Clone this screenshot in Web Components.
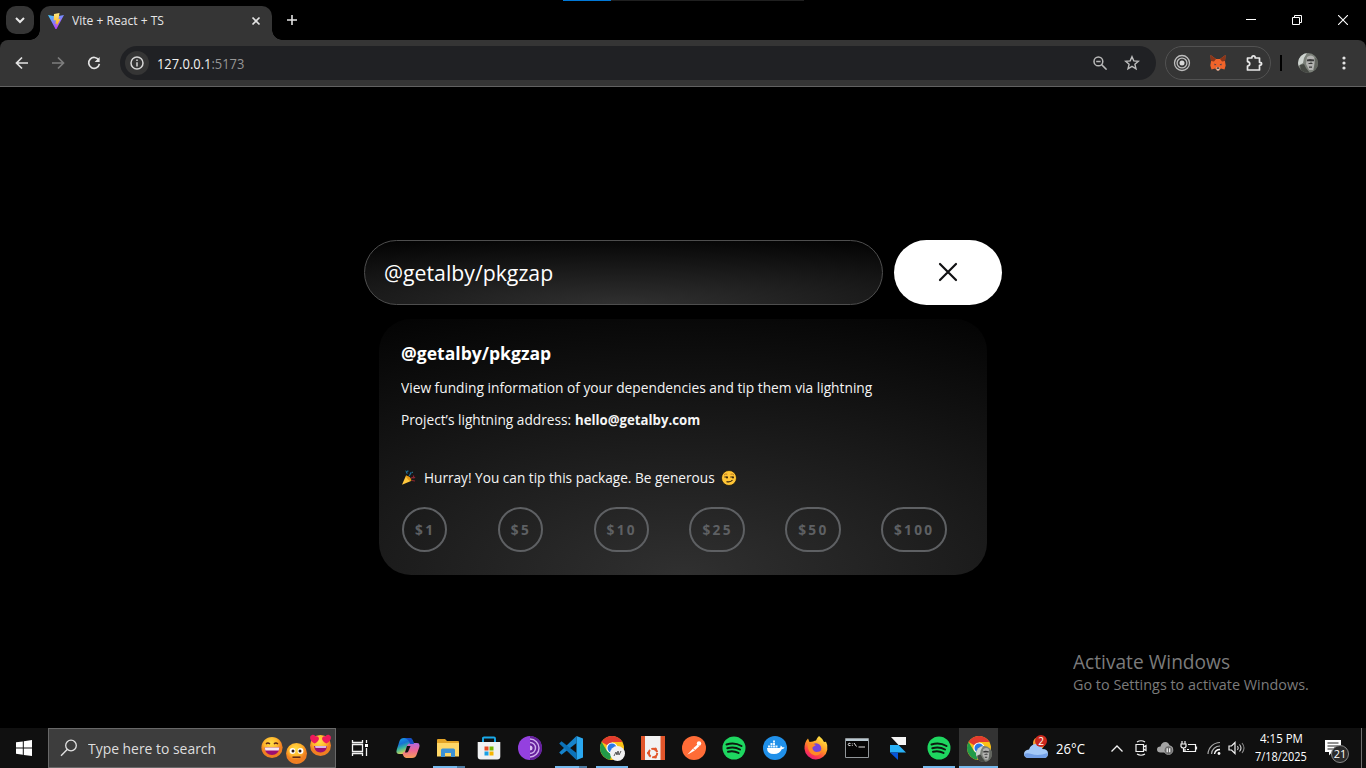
<!DOCTYPE html>
<html lang="en">
<head>
<meta charset="utf-8">
<title>Vite + React + TS</title>
<style>
html,body{margin:0;background:#000;width:1366px;height:768px;overflow:hidden;font-family:"Open Sans","Noto Sans",sans-serif}
</style>
</head>
<body>
<desktop-screen></desktop-screen>
<script>
const ICONS = {
  down: [12,12,'<path d="M2 4l4 4 4-4" fill="none" stroke="#e8e8e8" stroke-width="2"/>'],
  vite: [16,16,'<defs><linearGradient id="a" x1="0" x2=".6" y2="1"><stop stop-color="#41d1ff"/><stop offset="1" stop-color="#bd34fe"/></linearGradient><linearGradient id="b" x2="0" y2="1"><stop stop-color="#ffea83"/><stop offset="1" stop-color="#ffa800"/></linearGradient></defs><path d="M0 2l7.500 14h1L16 2 8 3.500z" fill="url(#a)"/><path d="M11.500 0L6 1l-.3 6.500 2.300-.3-.6 3.800 1.600-.4-.8 3.400L12.500 6l-2 .3z" fill="url(#b)"/>'],
  tabx: [10,10,'<path d="M1.500 1.500l7 7m0-7l-7 7" stroke="#e3e3e3" stroke-width="1.700"/>'],
  plus: [12,12,'<path d="M6 1v10M1 6h10" stroke="#e3e3e3" stroke-width="1.600"/>'],
  back: [14,14,'<path d="M13 7H2M7 1.500L1.500 7 7 12.500" fill="none" stroke="#e3e3e3" stroke-width="1.700"/>'],
  fwd: [14,14,'<path d="M1 7h11M7 1.500L12.500 7 7 12.500" fill="none" stroke="#7d7d7d" stroke-width="1.700"/>'],
  reload: [14,14,'<path d="M11.800 4.200A5.400 5.400 0 1 0 12.400 7.800" fill="none" stroke="#e3e3e3" stroke-width="1.700"/><path d="M12.600 1v5h-5z" fill="#e3e3e3"/>'],
  info: [14,14,'<circle cx="7" cy="7" r="6" fill="none" stroke="#d6d6d6" stroke-width="1.500"/><path d="M7 6.200v4.200M7 3.400v1.600" stroke="#d6d6d6" stroke-width="1.500"/>'],
  zoomout: [14,14,'<circle cx="5.400" cy="5.400" r="4.400" fill="none" stroke="#b9b9b9" stroke-width="1.500"/><path d="M8.600 8.600l5 5M3.200 5.400h4.400" stroke="#b9b9b9" stroke-width="1.500"/>'],
  star: [16,16,'<path d="M8 1.700l1.800 4.200 4.600.4-3.500 3 1.100 4.500L8 11.400l-4 2.400 1.100-4.500-3.500-3 4.600-.4z" fill="none" stroke="#bdbdbd" stroke-width="1.400"/>'],
  rings: [18,18,'<g fill="none" stroke="#bdbdbd"><circle cx="9" cy="9" r="7.500" stroke-width="1.300"/><circle cx="9" cy="9" r="4.900" stroke-width="1.300"/></g><circle cx="9" cy="9" r="2.500" fill="#d8d8d8"/>'],
  fox: [16,16,'<path d="M.5 0L6 4h4l5.500-4L15 6.500l.7 4-1.200 4-3.500-1L9 15.500H7L5 13.500l-3.500 1-1.200-4 .7-4z" fill="#f0642a"/><path d="M.5 0L6 4 4 6.500 1 6zM15.500 0L10 4l2 2.500 3-.5z" fill="#8a3519"/><path d="M4.500 8.500l2 1.500-2 .2zM11.500 8.500l-2 1.500 2 .2z" fill="#293b57"/><path d="M6 12.500h4l-1 3H7z" fill="#d5c3b8"/><path d="M7 12.500h2l.3 1.200H6.700z" fill="#222"/>'],
  puzzle: [18,18,'<path d="M2.500 4h4.300c0-2.800 3.400-2.800 3.400 0h4.300v4.300c2.800 0 2.800 3 0 3V16h-12v-4c3-.4 3-4 0-4.400z" fill="none" stroke="#e8e8e8" stroke-width="1.700" stroke-linejoin="round"/>'],
  avatar: [20,20,'<defs><clipPath id="c"><circle cx="10" cy="10" r="10"/></clipPath></defs><g clip-path="url(#c)"><path fill="#7b8079" d="M0 0h20v20H0z"/><path fill="#cdd3cf" d="M0 0h9L6 5l-1 5-5 3z"/><path fill="#454843" d="M2 12l4-1 2 4 4 5H3z"/><path fill="#b2b2b0" d="M9 4q4-3 7 0l1 6-2 7h-4l-3-6z"/><path fill="#3a3a3a" d="M9 6.500l3-.6 4 .6v1.700H9zM10 10h5l-1 1h-3zM11 13.500h3v1.300h-3z"/><path fill="#62655f" d="M17 5l3 1v12l-4-1z"/><path fill="#858783" d="M12 8h2v2h-2z"/></g>'],
  dots: [4,14,'<g fill="#e3e3e3"><circle cx="2" cy="2" r="1.600"/><circle cx="2" cy="7" r="1.600"/><circle cx="2" cy="12" r="1.600"/></g>'],
  min: [10,10,'<path d="M0 4.500h10" stroke="#fff"/>'],
  restore: [10,10,'<path d="M.5 2.500h7v7h-7zM2.500 2.500v-2h7v7h-2" fill="none" stroke="#fff"/>'],
  close: [10,10,'<path d="M0 0l10 10M10 0L0 10" stroke="#fff" stroke-width="1.100"/>'],
  bigx: [20,20,'<path d="M2 2l16 16M18 2L2 18" stroke="#101012" stroke-width="2.200" stroke-linecap="round"/>'],
  party: [16,16,'<path d="M1 14.700L5 5.500q4 1.500 5 5.500z" fill="#ffc83d"/><path d="M5 5.500q5 1 5.500 5.300-1.500.9-3.700-1.500Q4.600 7 5 5.500z" fill="#e49b16"/><path d="M6.500 3.500c-2-1-.5-3 1-2.200M8 6c1.500-1 1-3 2.500-3.600" fill="none" stroke="#1d6e9e" stroke-width="1.300"/><path d="M10 8.500c1.500-2 2.500.5 4-1.400M12.500 5.500v2M11 10.500l3 .5" fill="none" stroke="#8c2431" stroke-width="1.200"/><path d="M11 2l1 .6M4.500 1l.8.6" stroke="#2d8b96"/>'],
  smirk: [16,16,'<circle cx="8" cy="8" r="7.500" fill="#ffc536" stroke="#15110a" stroke-width=".7"/><path d="M3 5q1.500-1.500 3.300-.8M9.500 4.200Q11.500 3.400 13 5" fill="none" stroke="#c0781f" stroke-width="1"/><path d="M3.400 7h3.200M9.300 7h3.200M5.500 11.600q4 1 6-1.600" fill="none" stroke="#37250e" stroke-width="1.200"/><circle cx="6" cy="7.500" r="1" fill="#37250e"/><circle cx="12" cy="7.500" r="1" fill="#37250e"/>'],
  start: [16,16,'<path d="M0 2.300L6.800 1.400v6.200H0zM7.800 1.200L16 0v7.600H7.800zM0 8.500h6.800v6.200L0 13.800zM7.800 8.500H16V16l-8.200-1.100z" fill="#fff"/>'],
  search: [18,18,'<circle cx="11" cy="6.500" r="5.300" fill="none" stroke="#e2e2e2" stroke-width="1.300"/><path d="M7.200 10.500L1 16.800" stroke="#e2e2e2" stroke-width="1.400"/>'],
  emojis: [72,34,'<defs><radialGradient id="e" cx=".45" cy=".3"><stop stop-color="#ffe04a"/><stop offset=".65" stop-color="#ffb52b"/><stop offset="1" stop-color="#f07f22"/></radialGradient></defs><g transform="translate(0 -1.500)"><g fill="url(#e)"><circle cx="12" cy="18" r="10.600"/><circle cx="36.500" cy="24" r="10.500"/><circle cx="60.500" cy="16" r="10.500"/></g><path d="M4.500 18h15q-1 7.500-7.500 7.500T4.500 18z" fill="#9c0f70"/><path d="M4.700 18h14.600l-.6 3H5.400z" fill="#f5e7f4"/><path d="M6 14.500q1.700-2 4 0M14 14.500q1.700-2 4 0" stroke="#5c2518" fill="none" stroke-width="1.400"/><g fill="#fff"><circle cx="32.500" cy="21.500" r="2.900"/><circle cx="40.500" cy="21.500" r="2.900"/></g><g fill="#2c1718"><circle cx="33" cy="21.500" r="1.500"/><circle cx="40" cy="21.500" r="1.500"/></g><path d="M32.500 27.700h8" stroke="#5c2518" stroke-width="1.500"/><path d="M54 16.500h13q-.8 6.500-6.500 6.500T54 16.500z" fill="#9c0f70"/><path d="M55 16.500h11.500l-.6 2H55.500z" fill="#d9b6e5"/><path d="M50.500 6.500c2.500-2.500 4.500-1 5 .6 1.500-1.200 4 0 3.300 3-.6 2.300-3.500 3.900-4 3.900-2-.8-6-4-4.300-7.500zM70.500 6.500c-2.500-2.500-4.500-1-5 .6-1.500-1.200-4 0-3.300 3 .6 2.300 3.500 3.900 4 3.900 2-.8 6-4 4.300-7.500z" fill="#ef1b5b"/></g>'],
  taskview: [18,18,'<path d="M1.500 1v2.500h10V1M1.500 5.500h10v7h-10zM1.500 17v-2.500h10V17M15.500 1v3M15.500 9v8" fill="none" stroke="#f3f3f3" stroke-width="1.300"/><path d="M14 5h3v3h-3z" fill="#fff"/>'],
  copilot: [24,22,'<defs><linearGradient id="p" x2=".4" y2="1"><stop stop-color="#16a5ef"/><stop offset=".4" stop-color="#1671d5"/><stop offset=".65" stop-color="#39b79b"/><stop offset="1" stop-color="#e9d94b"/></linearGradient><linearGradient id="q" x2="0" y2="1"><stop stop-color="#b368df"/><stop offset=".5" stop-color="#ed6694"/><stop offset="1" stop-color="#f79d57"/></linearGradient></defs><path d="M8 1h6q2 0 3 3l1 3h-4q-2 0-3 3l-1.500 5Q9 17 6.500 17H3Q-.5 17 .8 12.500L3.500 4Q4.500 1 8 1z" fill="url(#p)"/><path d="M16 21h-6q-2 0-3-3l-.5-2q2 0 3-3L11 8.500Q12 6 15 6h6q3.500 0 2.200 4.500L20.500 18q-1 3-4.500 3z" fill="url(#q)"/><path d="M8 1h6q2 0 3 3l1 3h-4q-1-5-6-6z" fill="#174cc5"/><path d="M11 9h3.500l-2 5q-.6 1.500-2 1.500H9z" fill="#111"/>'],
  folder: [24,20,'<path d="M1 2q0-1 1-1h7l2 2h11q1 0 1 1v14H1z" fill="#e3a326"/><path d="M1 5h22v13.500H1z" fill="#ffd767"/><path d="M5 19v-7q0-1.500 1.500-1.500h11Q19 10.500 19 12v7h-4v-4H9v4z" fill="#3d92d5"/>'],
  store: [24,24,'<path d="M6 7V2.500Q6 1.500 7 1.500h10q1 0 1 1V7" fill="none" stroke="#19a9e9" stroke-width="1.900"/><path d="M.7 6h22.600v14.500q0 3-3 3H3.700q-3 0-3-3z" fill="#f0f1f2"/><path d="M7.500 10.500h4v4h-4z" fill="#e84b22"/><path d="M12.500 10.500h4v4h-4z" fill="#78b600"/><path d="M7.500 15.500h4v4h-4z" fill="#1aa0e5"/><path d="M12.500 15.500h4v4h-4z" fill="#f7b500"/>'],
  tor: [24,24,'<circle cx="12" cy="12" r="12" fill="#9440df"/><path d="M12 0a12 12 0 0 1 0 24z" fill="#65209c"/><path d="M12 3a9 9 0 0 1 0 18M12 6.500a5.500 5.500 0 0 1 0 11" fill="none" stroke="#cfaeed" stroke-width="1.400"/><path d="M12 9.500a2.500 2.500 0 0 1 0 5z" fill="#dac0f2"/>'],
  vscode: [24,24,'<path d="M17.500 0L24 2.600v18.800L17.500 24z" fill="#2aa7ef"/><path d="M17.500 0v7L2.500 18.700.2 16.500z" fill="#1683cb"/><path d="M17.500 24v-7L2.500 5.300.2 7.500z" fill="#0c72b9"/>'],
  chrome: [24,24,'<circle cx="12" cy="12" r="12" fill="#fbc116"/><path d="M1.600 6A12 12 0 0 1 22.400 6H12v6z" fill="#e33b2e"/><path d="M1.600 6L7 15l5 3-2 5.800A12 12 0 0 1 1.600 6z" fill="#229a48"/><circle cx="12" cy="12" r="5.600" fill="#fff"/><circle cx="12" cy="12" r="4.500" fill="#2a78e6"/>'],
  ubuntu: [24,24,'<path fill="#f2f2f2" d="M0 0h24v24H0z"/><path fill="#e2562b" d="M0 0h4v24H0zM19.500 0H24v24h-4.500z"/><circle cx="12" cy="17" r="4.200" fill="none" stroke="#e2562b" stroke-width="2" stroke-dasharray="7.300 1.500"/><g fill="#e2562b"><circle cx="7.400" cy="17" r="1.500"/><circle cx="14.400" cy="13" r="1.500"/><circle cx="14.400" cy="21" r="1.500"/></g>'],
  postman: [24,24,'<circle cx="12" cy="12" r="12" fill="#ff6c37"/><path d="M5 19l6.500-7 4-3.500 1.800 1.700-5 4.500z" fill="#fff"/><circle cx="17" cy="7.500" r="2.200" fill="#fff"/><path d="M5 19l4-1M11 12.500l2 1.500" stroke="#ff6c37" stroke-width=".7"/>'],
  spotify: [24,24,'<circle cx="12" cy="12" r="11.500" fill="#1ed760"/><path d="M4.500 8.500q8-2.500 15 1.500M5.300 12.200q7-2 12.700 1.300M6 15.700q5.500-1.500 10.500 1.200" fill="none" stroke="#0c1a10" stroke-width="2" stroke-linecap="round"/>'],
  docker: [24,24,'<circle cx="12" cy="12" r="12" fill="#2090e9"/><path d="M4 12h12.500q1.500-.5 1-2.500 1.500.8 1.700 1.800 1.500-.4 2.500.3-1 1.600-3 1.600Q17 18 11 18q-7 0-7-6z" fill="#fff"/><path d="M5 9.500h2v2H5zM7.500 9.500h2v2h-2zM10 9.500h2v2h-2zM12.500 9.500h2v2h-2zM7.500 7h2v2h-2zM10 7h2v2h-2zM10 4.500h2v2h-2z" fill="#e9f6ff"/>'],
  firefox: [24,24,'<defs><linearGradient id="f" x1=".8" x2=".2" y2="1"><stop stop-color="#fff04a"/><stop offset=".45" stop-color="#ff9823"/><stop offset=".75" stop-color="#ff3c49"/><stop offset="1" stop-color="#e31587"/></linearGradient></defs><path d="M15 0q4 3 5 6l2-.2q2 3 1.300 8A11.500 11.500 0 0 1 .5 13Q.3 6 4 2.500L5.500 6 9 5.500q2-1 3-1 1-3 3-4.500z" fill="url(#f)"/><circle cx="12" cy="12.500" r="5.300" fill="#7543dc"/><path d="M3.500 8Q8 6.500 12 9l-3.500 2.200Q8 15 12.500 16q3.500 0 5.500-2.500-1 6-7 6-7-1-7.500-11.500z" fill="#ff8a26"/>'],
  cmd: [24,20,'<path d="M.5.500h23v19H.5z" fill="#050505" stroke="#919699"/><path d="M1 1h22v2H1z" fill="#b9c8d1"/><path d="M5.500 5.500q-2-1-2.300.8 0 2 2.300 1.200M7.300 5.500v.8M7.300 7.200V8M9 5l2.500 3.500M13.500 9H20" stroke="#e2e2e2" fill="none"/>'],
  framer: [16,23,'<path d="M1 0h15v8H8.500z" fill="#f4f4f4"/><path d="M0 8h8.500l7.500 7.500H0z" fill="#28b1f7"/><path d="M0 15.500h8V23z" fill="#0755d8"/>'],
  weather: [26,24,'<circle cx="16" cy="7" r="6" fill="#f2a235"/><path d="M6 22Q1 22 1 18t5-4.500Q8 8 13 8t6.500 5Q25 13 25 17.500T20.500 22z" fill="#a3c8f7"/><path d="M6 22Q1 22 1.500 18q2-1.500 7 0 7 2.500 16-1 1 5-4 5z" fill="#729fe6"/>'],
  chev: [14,9,'<path d="M1.500 7.500L7 2l5.500 5.500" fill="none" stroke="#f2f2f2" stroke-width="1.300"/>'],
  cam: [12,18,'<path d="M2 3q4-2.500 8 0M2 15q4 2.500 8 0M1 5.500h7.500v7H1zM8.500 8L11 6.500v5L8.500 10" fill="none" stroke="#f2f2f2" stroke-width="1.200"/>'],
  cloud: [17,14,'<path d="M3.500 11.500Q0 11.500 0 8.500t3.500-3Q4.500 1 8.500 1q3 0 4 3.500Q16 5 16 8t-3 3.500z" fill="#a4a4a4"/><circle cx="11.500" cy="9.200" r="4.400" fill="#6b6b6b" stroke="#bbb" stroke-width=".6"/><path d="M10.200 7.200v4M12.700 7.200v4" stroke="#fff" stroke-width="1.200"/>'],
  battery: [18,16,'<path d="M8 4.500h7.500v7H5V9M16.500 6.500v3M2 1v3M5 1v3M1 4h5v2.500Q5.500 8 3.500 8T1 6.500zM3.500 8v3.500H5" fill="none" stroke="#f2f2f2" stroke-width="1.200"/><path d="M7 9h2v1H7z" fill="#fff"/>'],
  wifi: [14,14,'<path d="M1 13A12 12 0 0 1 13 1.500M4.500 13A8.500 8.500 0 0 1 13 5" fill="none" stroke="#aaa" stroke-width="1.200"/><path d="M7.500 13A5.500 5.500 0 0 1 13 8.500" fill="none" stroke="#fff" stroke-width="1.300"/><circle cx="12" cy="12.500" r="1.400" fill="#fff"/>'],
  volume: [18,14,'<path d="M1 5h2.500L7 1.500v11L3.500 9H1z" fill="none" stroke="#f2f2f2" stroke-width="1.200"/><path d="M9.500 5q1.500 2 0 4M11.500 3.500q3 3.500 0 7" fill="none" stroke="#ddd" stroke-width="1.100"/><path d="M14 2q4 5 0 10" fill="none" stroke="#888" stroke-width="1.100"/>'],
  note: [16,16,'<path d="M0 0h16v12H7l-3 3.500V12H0z" fill="#fff"/><path d="M2.500 3h11M2.500 6h11M2.500 9h8" stroke="#222" stroke-width="1"/>'],
};

class UiIcon extends HTMLElement {
  connectedCallback() {
    const [w, h, body] = ICONS[this.getAttribute('name')];
    const r = this.attachShadow({mode: 'open'});
    r.innerHTML = `<style>:host{display:block;flex:none;width:${w}px;height:${h}px}svg{display:block}</style><svg width="${w}" height="${h}" viewBox="0 0 ${w} ${h}">${body}</svg>`;
  }
}
customElements.define('ui-icon', UiIcon);

/* A single line of text condensed or widened to an exact advance width. */
class FitText extends HTMLElement {
  connectedCallback() {
    const w = +this.getAttribute('w');
    const r = this.attachShadow({mode: 'open'});
    r.innerHTML = `<style>:host{display:block;flex:none;width:${w}px;white-space:nowrap}span{display:inline-block;transform-origin:0 50%}</style><span><slot></slot></span>`;
    const s = r.querySelector('span');
    s.style.transform = `scaleX(${w / s.offsetWidth})`;
  }
}
customElements.define('fit-text', FitText);

const define = (tag, html) => {
  const t = document.createElement('template');
  t.innerHTML = html;
  customElements.define(tag, class extends HTMLElement {
    constructor() { super(); this.attachShadow({mode: 'open'}); }
    connectedCallback() { if (!this.shadowRoot.firstChild) this.shadowRoot.append(document.importNode(t.content, true)); }
  });
};

define('tab-strip', `<style>
:host{display:flex;height:40px;background:#000;position:relative;box-sizing:border-box;padding-left:6px}
.menu{width:28px;height:28px;margin-top:6px;border-radius:10px;background:#353535;display:grid;place-items:center}
.tab{position:relative;margin:6px 0 0 6px;width:232px;height:34px;box-sizing:border-box;background:#353535;border-radius:10px 10px 0 0;display:flex;align-items:center;padding:0 11px 5px 8px;font-size:12px;line-height:16px;color:#e6e6e6}
.tab:before,.tab:after{content:"";position:absolute;bottom:0;width:10px;height:10px}
.tab:before{left:-10px;background:radial-gradient(circle at 0 0,#0000 9.500px,#353535 10px)}
.tab:after{right:-10px;background:radial-gradient(circle at 100% 0,#0000 9.500px,#353535 10px)}
fit-text{margin:0 auto 0 8px}
.new{margin:14px 0 0 14px}
.win{margin:15px 18px 0 auto;display:flex;gap:36px}
.load{position:absolute;left:563px;top:0;width:241px;height:1px;background:linear-gradient(90deg,#0078d7 48px,#1f1f1f 48px)}
</style><div class="menu"><ui-icon name="down"></ui-icon></div>
<div class="tab"><ui-icon name="vite"></ui-icon><fit-text w="91.500">Vite + React + TS</fit-text><ui-icon name="tabx"></ui-icon></div>
<ui-icon class="new" name="plus"></ui-icon>
<div class="win"><ui-icon name="min"></ui-icon><ui-icon name="restore"></ui-icon><ui-icon name="close"></ui-icon></div><div class="load"></div>`);

define('tool-bar', `<style>
:host{display:flex;align-items:center;height:47px;box-sizing:border-box;background:#353535;border-bottom:1px solid #626262;border-radius:8px 8px 0 0;padding:0 20px 0 15px}
.nav{display:flex;gap:22px}
.url{margin-left:19px;width:1036px;height:34px;border-radius:17px;background:#202124;display:flex;align-items:center;box-sizing:border-box;padding:0 16px 0 5px;font-size:14px;color:#f1f1f1}
.info{width:24px;height:24px;border-radius:50%;background:#353535;display:grid;place-items:center;margin-right:8px}
.url span{color:#959595}
.url ui-icon[name=zoomout]{margin-left:auto;margin-right:17px}
.ext{margin-left:9px;width:106px;height:34px;box-sizing:border-box;border:1px solid #525252;border-radius:17px;display:flex;align-items:center;justify-content:space-between;padding:0 7px 0 7px}
.bar{width:2px;height:16px;background:#000;margin:0 16px 0 9px}
ui-icon[name=dots]{margin-left:24px}
</style><div class="nav"><ui-icon name="back"></ui-icon><ui-icon name="fwd"></ui-icon><ui-icon name="reload"></ui-icon></div>
<div class="url"><div class="info"><ui-icon name="info"></ui-icon></div><fit-text w="87.500">127.0.0.1<span>:5173</span></fit-text><ui-icon name="zoomout"></ui-icon><ui-icon name="star"></ui-icon></div>
<div class="ext"><ui-icon name="rings"></ui-icon><ui-icon name="fox"></ui-icon><ui-icon name="puzzle"></ui-icon></div><div class="bar"></div><ui-icon name="avatar"></ui-icon><ui-icon name="dots"></ui-icon>`);

define('search-field', `<style>
:host{display:flex;gap:11px;height:65px;color:#fff}
.in{width:519px;box-sizing:border-box;border:1px solid #4e4e4e;border-radius:33px;background:radial-gradient(112% 118% at 50% 100%,#303030,#000);display:flex;align-items:center;padding:0 0 2px 19px;font-size:22px;line-height:30px}
.btn{width:108px;box-sizing:border-box;padding-bottom:1px;background:#fff;border-radius:33px;display:grid;place-items:center}
</style><div class="in"><fit-text w="169"><slot></slot></fit-text></div><div class="btn"><ui-icon name="bigx"></ui-icon></div>`);

define('tip-button', `<style>
:host{display:flex;height:45px;min-width:45px;box-sizing:border-box;border:2px solid #5e6063;border-radius:23px;padding:0 10px 0 11px;align-items:center;justify-self:start;color:#5e6063;font:700 13.700px/20px "Open Sans",sans-serif;letter-spacing:2.300px}
</style><slot></slot>`);

define('package-card', `<style>
:host{display:block;width:608px;height:256px;box-sizing:border-box;border-radius:32px;background:radial-gradient(112% 118% at 50% 100%,#303030,#010101);padding:22px 22px 0;color:#f5f5f5;font-size:14px;line-height:20px}
.t{font-weight:700;font-size:17.500px;line-height:25px;color:#fff}
.d{margin-top:12px}
.a{margin-top:12px;display:flex;gap:4px}
b{font-weight:700}
.h{margin-top:38px;display:flex;align-items:center}
.h fit-text{margin:0 6px 0 7px}
.tips{display:grid;grid-template-columns:repeat(6,95.800px);margin:19px 0 0 1px}
</style><fit-text class="t" w="150.500">@getalby/pkgzap</fit-text>
<fit-text class="d" w="471.500">View funding information of your dependencies and tip them via lightning</fit-text>
<div class="a"><fit-text w="170">Project’s lightning address:</fit-text><fit-text w="125.500"><b>hello@getalby.com</b></fit-text></div>
<div class="h"><ui-icon name="party"></ui-icon><fit-text w="291">Hurray! You can tip this package. Be generous</fit-text><ui-icon name="smirk"></ui-icon></div>
<div class="tips"><tip-button>$1</tip-button><tip-button>$5</tip-button><tip-button>$10</tip-button><tip-button>$25</tip-button><tip-button>$50</tip-button><tip-button>$100</tip-button></div>`);

define('page-view', `<style>
:host{display:flex;flex-direction:column;align-items:center;height:641px;box-sizing:border-box;padding-top:153px;background:#000;position:relative}
package-card{margin-top:14px}
.act{position:absolute;left:1073px;top:562px;color:#7b7b7b;font-size:15px;line-height:20px;font-family:"Open Sans";font-weight:400}
.act .b{font-size:19.500px;line-height:25px}
</style><search-field>@getalby/pkgzap</search-field><package-card></package-card>
<div class="act"><fit-text class="b" w="157">Activate Windows</fit-text><fit-text w="236">Go to Settings to activate Windows.</fit-text></div>`);

define('task-app', `<style>
:host{display:grid;place-items:center;width:40.850px;height:40px;position:relative;flex:none}
:host([active]){width:39px;background:#333}
.l{display:none;position:absolute;bottom:0;left:4.500px;width:32px;height:2px;background:#76b9ed}
:host([run]) .l{display:block}
:host([multi]) .l{background:linear-gradient(90deg,#76b9ed 24px,#4e7ca2 24px)}
:host([active]) .l{display:block;left:0;width:39px}
::slotted(.badge){position:absolute!important;left:23px;top:18px}
</style><slot></slot><div class="l"></div>`);

define('mini-badge', `<style>:host{display:grid;place-items:center;width:15px;height:15px;border-radius:50%;background:#f1f1f1;overflow:hidden}svg{display:block}</style><slot><svg width="9" height="7"><path d="M1 6l2-4 1 3 1-4 1 4 2-4" fill="none" stroke="#555"/></svg></slot>`);

define('task-bar', `<style>
:host{display:flex;height:40px;background:#101010;color:#fff}
.s{width:48px;display:grid;place-items:center}
.q{width:288px;box-sizing:border-box;border:1px solid #686868;background:#3d3d3d;display:flex;align-items:center;padding:0 3px 0 11px;font-size:15px;color:#dedede}
.q fit-text{margin:0 auto 0 10px}
.tv{width:51.200px;box-sizing:border-box;padding-right:3px;display:grid;place-items:center}
.av{transform:scale(.800);transform-origin:0 0}
.tray{margin-left:auto;display:flex;align-items:center;padding-right:4px;font-size:14.500px}
.w{position:relative;margin-right:7px}
.r{position:absolute;left:12px;top:-1px;width:12px;height:12px;border-radius:50%;background:#cc281d;font:10px/12px "Open Sans";text-align:center}
.clock{font-size:12px;line-height:18px;display:flex;flex-direction:column;align-items:center;width:54px}
.n{position:relative;margin-left:17px;width:16px;height:20px;margin-top:4px}
.c{position:absolute;left:6px;top:5px;width:18px;height:18px;box-sizing:border-box;border-radius:50%;border:1px solid #8a8a8a;background:#2a2a2a;font:11px/16px "Open Sans";text-align:center}
.e{width:1px;height:40px;background:#707070;margin-left:20px}
</style><div class="s"><ui-icon name="start"></ui-icon></div>
<div class="q"><ui-icon name="search"></ui-icon><fit-text w="128">Type here to search</fit-text><ui-icon name="emojis"></ui-icon></div>
<div class="tv"><ui-icon name="taskview"></ui-icon></div>
<task-app><ui-icon name="copilot"></ui-icon></task-app><task-app run multi><ui-icon name="folder"></ui-icon></task-app><task-app><ui-icon name="store"></ui-icon></task-app><task-app><ui-icon name="tor"></ui-icon></task-app><task-app run multi><ui-icon name="vscode"></ui-icon></task-app><task-app run><ui-icon name="chrome"></ui-icon><mini-badge class="badge" style="left:19px"></mini-badge></task-app><task-app><ui-icon name="ubuntu"></ui-icon></task-app><task-app><ui-icon name="postman"></ui-icon></task-app><task-app><ui-icon name="spotify"></ui-icon></task-app><task-app><ui-icon name="docker"></ui-icon></task-app><task-app><ui-icon name="firefox"></ui-icon></task-app><task-app><ui-icon name="cmd"></ui-icon></task-app><task-app><ui-icon name="framer"></ui-icon></task-app><task-app run><ui-icon name="spotify"></ui-icon></task-app><task-app active><ui-icon name="chrome"></ui-icon><ui-icon class="badge av" name="avatar" style="left:17px"></ui-icon></task-app>
<div class="tray"><div class="w"><ui-icon name="weather"></ui-icon><div class="r">2</div></div><fit-text w="29">26°C</fit-text>
<ui-icon name="chev" style="margin-left:25px"></ui-icon><ui-icon name="cam" style="margin-left:11px"></ui-icon><ui-icon name="cloud" style="margin-left:10px"></ui-icon><ui-icon name="battery" style="margin-left:6px"></ui-icon><ui-icon name="wifi" style="margin-left:9px"></ui-icon><ui-icon name="volume" style="margin:0 8px 0 7px"></ui-icon>
<div class="clock"><fit-text w="43">4:15 PM</fit-text><fit-text w="52">7/18/2025</fit-text></div>
<div class="n"><ui-icon name="note"></ui-icon><div class="c">21</div></div><div class="e"></div></div>`);

define('desktop-screen', `<style>:host{display:flex;flex-direction:column;width:1366px;height:768px;background:#000}</style><tab-strip></tab-strip><tool-bar></tool-bar><page-view></page-view><task-bar></task-bar>`);
</script>
</body>
</html>
